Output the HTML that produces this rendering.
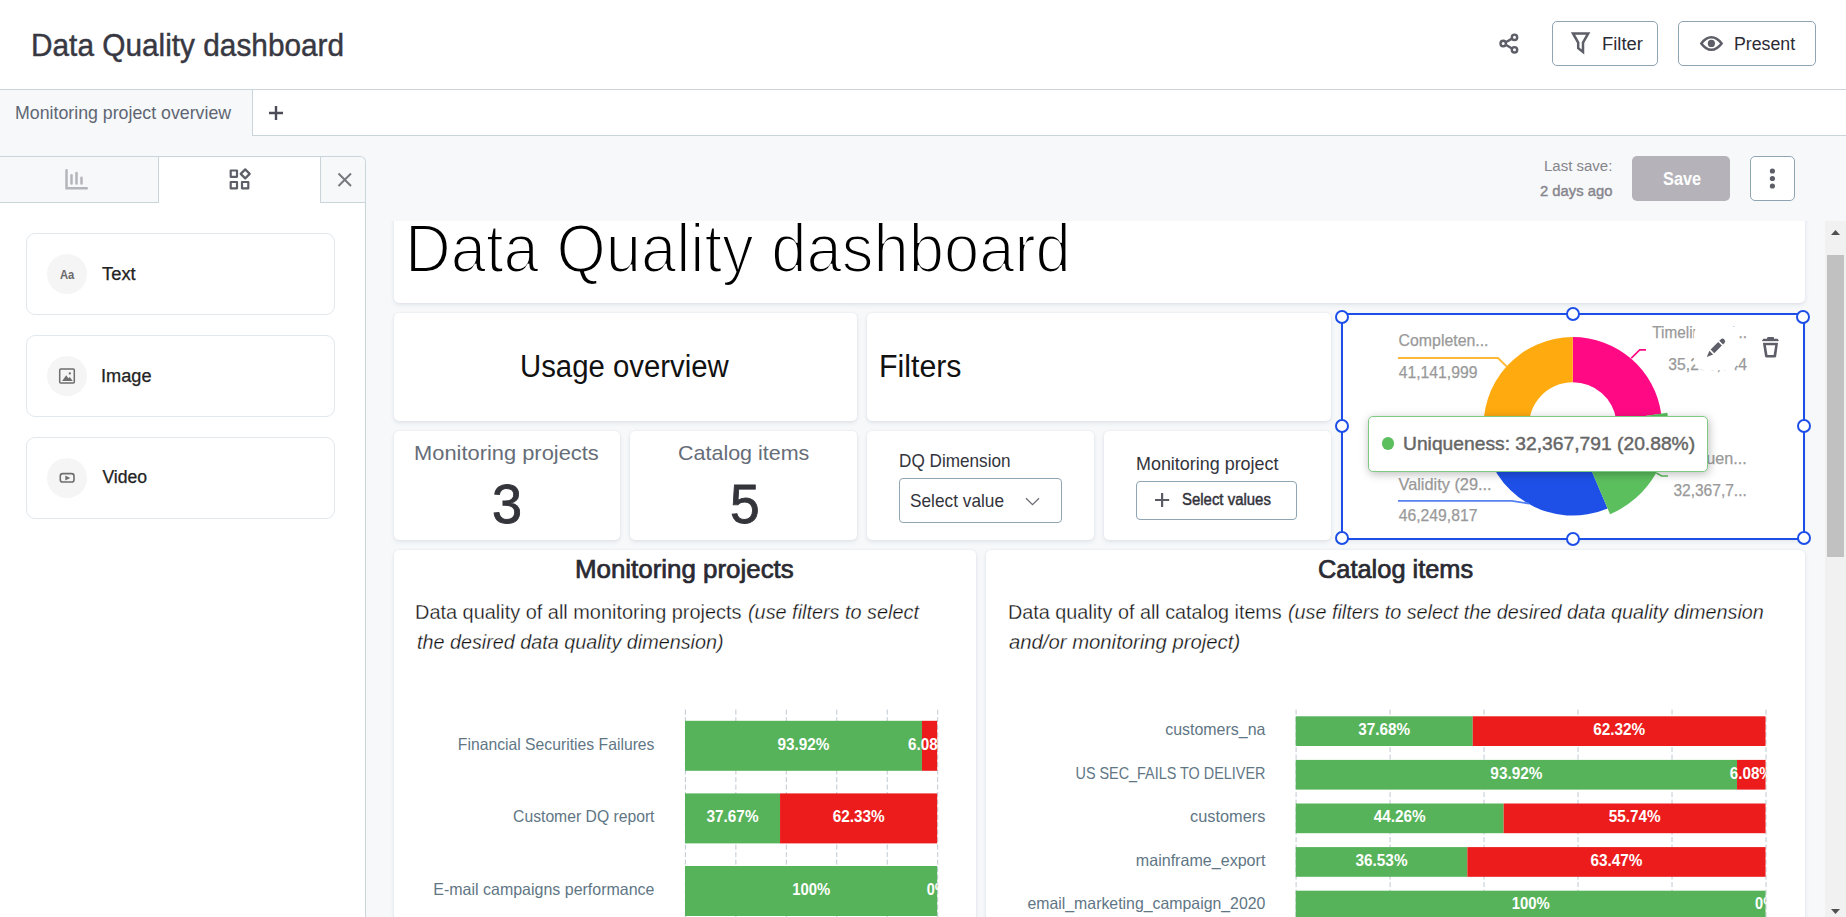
<!DOCTYPE html>
<html lang="en"><head><meta charset="utf-8"><title>Data Quality dashboard</title>
<style>
*{box-sizing:border-box;margin:0;padding:0}
html,body{width:1846px;height:917px;overflow:hidden;background:#f6f8fa;font-family:"Liberation Sans", sans-serif;}
body{position:relative}
div,span,header,nav,aside,main,section,button,h1,h2,h3,p,svg,ul,li,label{position:absolute}
ul{list-style:none}
.w{left:0;top:0;width:0;height:0}
.t{white-space:nowrap;line-height:normal;transform-origin:0 0;display:block}
h1,h2,h3{font-weight:inherit;font-size:inherit}
button{font-family:inherit;background:#fff;border:1px solid #8fa5b3;border-radius:5px;overflow:visible}
.card{background:#fff;border-radius:5px;box-shadow:0 2px 4px rgba(60,75,95,.10),0 0 2px rgba(60,75,95,.09)}
.pcard{background:#fff;border:1px solid #e2e8ec;border-radius:9px}
.circ{background:#f5f5f5;border-radius:50%}
</style></head>
<body>
<header style="left:0.00px;top:0.00px;width:1846.00px;height:90.00px;background:#fff;border-bottom:1px solid #c9d4db"><h1 class="w"><span class="t" style="left:30.88px;top:27.60px;font-size:31px;color:#383842;transform:scaleX(0.9614);-webkit-text-stroke:0.45px #383842;">Data Quality dashboard</span></h1><svg style="left:1496.00px;top:30.00px" width="26" height="28" viewBox="1496 30 26 28" fill="none" stroke="#5d5e67" stroke-width="2.4"><path d="M1506.2 42 L1511.6 38.9 M1506.2 45 L1511.6 48.2"/><circle cx="1514.5" cy="37.3" r="2.7"/><circle cx="1503.2" cy="43.5" r="2.7"/><circle cx="1514.5" cy="49.8" r="2.7"/></svg><button style="left:1552.00px;top:21.00px;width:106.00px;height:45.00px;"><svg style="left:15.00px;top:7.00px" width="26" height="28" viewBox="1568 29 26 28" fill="none" stroke="#5d5e67" stroke-width="2.5" stroke-linejoin="miter"><path d="M1573 33.4 H1588.2 L1583 42.6 V52 L1578.2 48.2 V42.6 Z"/></svg><span class="t" style="left:48.69px;top:11.80px;font-size:18px;color:#2b2b36;transform:scaleX(1.0229);">Filter</span></button><button style="left:1678.00px;top:21.00px;width:138.00px;height:45.00px;"><svg style="left:19.00px;top:11.00px" width="28" height="22" viewBox="1698 33 28 22" fill="none" stroke="#5d5e67" stroke-width="2.5"><path d="M1701.3 43.4 C1704.5 39 1707.8 37.2 1711.4 37.2 C1715 37.2 1718.3 39 1721.6 43.4 C1718.3 47.8 1715 49.7 1711.4 49.7 C1707.8 49.7 1704.5 47.8 1701.3 43.4 Z"/><circle cx="1711.4" cy="43.4" r="3.6" fill="#5d5e67" stroke="none"/></svg><span class="t" style="left:54.94px;top:11.70px;font-size:18px;color:#2b2b36;transform:scaleX(0.9861);">Present</span></button></header>
<nav style="left:0.00px;top:90.00px;width:1846.00px;height:46.00px;"><div style="left:0.00px;top:0.00px;width:252.00px;height:45.00px;"><span class="t" style="left:15.34px;top:11.90px;font-size:18.5px;color:#5f6672;transform:scaleX(0.9597);">Monitoring project overview</span></div><div style="left:252.00px;top:0.00px;width:1594.00px;height:46.00px;background:#fff;border-left:1px solid #c9d4db;border-bottom:1px solid #c9d4db"><svg style="left:15.00px;top:15.00px" width="16" height="16" viewBox="268 105 16 16" stroke="#4b4c57" stroke-width="2.4" fill="none"><path d="M276 106 V120 M269 113 H283"/></svg></div></nav>
<aside style="left:0.00px;top:156.00px;width:366.00px;height:770.00px;background:#fff;border-top:1px solid #c9d4db;border-right:1px solid #c9d4db;border-top-right-radius:6px"><div style="left:0.00px;top:0.00px;width:159.00px;height:46.00px;background:#f6f8fa;border-right:1px solid #c9d4db;border-bottom:1px solid #c9d4db"><svg style="left:62.00px;top:9.00px" width="30" height="27" viewBox="62 166 30 27" fill="none" stroke="#b5b4ba" stroke-width="2.5" stroke-linecap="round"><path d="M66.5 170.3 V188.3 H86.8" stroke-linejoin="miter"/><path d="M71.5 175.3 V183.4 M76.5 173.1 V183.4 M81.5 177.8 V183.4"/></svg></div><div style="left:159.00px;top:0.00px;width:161.00px;height:46.00px;"><svg style="left:67.00px;top:8.00px" width="28" height="28" viewBox="226 165 28 28" fill="none" stroke="#5d5e67" stroke-width="2.2" stroke-linejoin="round"><rect x="230.7" y="170.5" width="6.3" height="6.3"/><rect x="230.7" y="182" width="6.3" height="6.3"/><rect x="242" y="182" width="6.3" height="6.3"/><path d="M245.2 169.4 L249.7 173.9 L245.2 178.4 L240.7 173.9 Z"/></svg></div><div style="left:320.00px;top:0.00px;width:45.00px;height:46.00px;background:#f6f8fa;border-left:1px solid #c9d4db;border-bottom:1px solid #c9d4db;border-top-right-radius:5px"><svg style="left:14.00px;top:13.00px" width="20" height="20" viewBox="335 170 20 20" fill="none" stroke="#77777e" stroke-width="2"><path d="M338.5 173.5 L351 186 M351 173.5 L338.5 186"/></svg></div><div class="pcard" style="left:26.00px;top:76.00px;width:309.00px;height:82.00px;"><div class="circ" style="left:20.00px;top:20.00px;width:40.00px;height:40.00px;"></div><span class="t" style="left:32.62px;top:33.50px;font-size:12.5px;color:#6a6a6a;font-weight:700;transform:scaleX(0.8951);">Aa</span><span class="t" style="left:75.01px;top:29.70px;font-size:17.6px;color:#222;transform:scaleX(1.0439);-webkit-text-stroke:0.25px #222;">Text</span></div><div class="pcard" style="left:26.00px;top:178.00px;width:309.00px;height:82.00px;"><div class="circ" style="left:20.00px;top:20.00px;width:40.00px;height:40.00px;"></div><svg style="left:30px;top:30px" width="20" height="20" viewBox="0 0 20 20" fill="none" stroke="#6e6e6e" stroke-width="1.5"><rect x="2.7" y="3" width="14.6" height="14.1" rx="1"/><path d="M5.1 15 L9.2 9.3 L11.3 12.2 L12.8 11 L15.7 15 Z" fill="#6e6e6e" stroke="none"/><circle cx="12.8" cy="7.4" r="1.15" fill="#6e6e6e" stroke="none"/></svg><span class="t" style="left:74.05px;top:29.60px;font-size:17.6px;color:#222;transform:scaleX(1.0333);-webkit-text-stroke:0.25px #222;">Image</span></div><div class="pcard" style="left:26.00px;top:280.00px;width:309.00px;height:82.00px;"><div class="circ" style="left:20.00px;top:20.00px;width:40.00px;height:40.00px;"></div><svg style="left:30px;top:30px" width="20" height="20" viewBox="0 0 20 20" fill="none" stroke="#6e6e6e" stroke-width="1.6"><rect x="3.3" y="5.6" width="13.7" height="8.4" rx="2.3"/><path d="M8.3 7.5 L13.2 10 L8.3 12.4 Z" fill="#6e6e6e" stroke="none"/></svg><span class="t" style="left:75.45px;top:29.30px;font-size:17.6px;color:#222;-webkit-text-stroke:0.25px #222;">Video</span></div></aside>
<div style="left:1530.00px;top:150.00px;width:280.00px;height:60.00px;"><span class="t" style="left:14.47px;top:6.90px;font-size:15.5px;color:#86848c;transform:scaleX(0.9666);">Last save:</span><span class="t" style="left:9.56px;top:31.60px;font-size:15.5px;color:#86848c;transform:scaleX(0.9541);-webkit-text-stroke:0.4px #86848c;">2 days ago</span><button style="left:102.00px;top:6.00px;width:98.00px;height:45.00px;background:#b5b3b9;border:none;border-radius:5px"><span class="t" style="left:30.53px;top:12.70px;font-size:17.6px;color:#fff;font-weight:700;transform:scaleX(0.9278);">Save</span></button><button style="left:220.00px;top:6.00px;width:45.00px;height:45.00px;"><svg style="left:15.00px;top:8.00px" width="12" height="28" viewBox="1766 165 12 28" fill="#5d5e67"><circle cx="1772.4" cy="171" r="2.6"/><circle cx="1772.4" cy="178.5" r="2.6"/><circle cx="1772.4" cy="186" r="2.6"/></svg></button></div>
<main style="left:366px;top:221px;width:1459px;height:696px;overflow:hidden"><section class="card" style="left:28.00px;top:-71.00px;width:1411.00px;height:152.70px;"><h2 class="w"><span class="t" style="left:10.80px;top:58.10px;font-size:69.25px;color:#000;transform:scaleX(0.9151);-webkit-text-stroke:2.2px #fff;">Data Quality dashboard</span></h2></section><section class="card" style="left:28.00px;top:92.00px;width:463.00px;height:108.00px;"><h2 class="w"><span class="t" style="left:125.84px;top:35.80px;font-size:31px;color:#111;transform:scaleX(0.9467);">Usage overview</span></h2></section><section class="card" style="left:501.00px;top:92.00px;width:464.00px;height:108.00px;"><h2 class="w"><span class="t" style="left:12.11px;top:35.70px;font-size:31px;color:#111;transform:scaleX(0.9774);">Filters</span></h2></section><section class="card" style="left:28.00px;top:210.00px;width:226.00px;height:109.00px;"><span class="t" style="left:20.11px;top:9.80px;font-size:21px;color:#666d78;transform:scaleX(1.0415);">Monitoring projects</span><span class="t" style="left:97.79px;top:41.20px;font-size:55px;color:#34343b;transform:scaleX(0.9815);-webkit-text-stroke:0.9px #34343b;">3</span></section><section class="card" style="left:264.00px;top:210.00px;width:227.00px;height:109.00px;"><span class="t" style="left:48.01px;top:9.80px;font-size:21px;color:#666d78;transform:scaleX(1.0232);">Catalog items</span><span class="t" style="left:99.71px;top:41.20px;font-size:55px;color:#34343b;transform:scaleX(0.9700);-webkit-text-stroke:0.9px #34343b;">5</span></section><section class="card" style="left:501.00px;top:210.00px;width:227.00px;height:109.00px;"><label class="w"><span class="t" style="left:31.89px;top:18.80px;font-size:19px;color:#33333b;transform:scaleX(0.9027);">DQ Dimension</span></label><button style="left:32.00px;top:47.00px;width:163.00px;height:45.00px;border-radius:4px"><span class="t" style="left:10.12px;top:10.80px;font-size:19px;color:#33333b;transform:scaleX(0.9086);">Select value</span><svg style="left:122.00px;top:15.00px" width="20" height="14" viewBox="1022 494 20 14" fill="none" stroke="#6b6c75" stroke-width="1.3"><path d="M1026 498.2 L1032.5 504.6 L1039 498.2"/></svg></button></section><section class="card" style="left:738.00px;top:210.00px;width:227.00px;height:109.00px;"><label class="w"><span class="t" style="left:31.93px;top:21.60px;font-size:19px;color:#33333b;transform:scaleX(0.9435);">Monitoring project</span></label><button style="left:32.00px;top:50.00px;width:161.00px;height:39.00px;border-radius:4px"><svg style="left:15.00px;top:8.00px" width="20" height="20" viewBox="1152 490 20 20" fill="none" stroke="#5a5b64" stroke-width="2.2"><path d="M1162.1 493 V507 M1155 500 H1169.2"/></svg><span class="t" style="left:45.35px;top:9.00px;font-size:15.8px;color:#33333b;transform:scaleX(0.9457);-webkit-text-stroke:0.45px #33333b;">Select values</span></button></section><section class="card" style="left:28.00px;top:329.00px;width:581.50px;height:410.00px;"><h3 class="w"><span class="t" style="left:181.03px;top:4.90px;font-size:25px;color:#2a2a33;transform:scaleX(1.0357);-webkit-text-stroke:0.7px #2a2a33;">Monitoring projects</span></h3><p class="w"><span class="t" style="left:21.22px;top:50.10px;font-size:20.5px;color:#111;transform:scaleX(0.9712);-webkit-text-stroke:0.3px #fff;">Data quality of all monitoring projects</span><span class="t" style="left:353.52px;top:50.10px;font-size:20.5px;color:#111;font-style:italic;transform:scaleX(0.9680);-webkit-text-stroke:0.3px #fff;">(use filters to select</span><span class="t" style="left:23.15px;top:79.80px;font-size:20.5px;color:#111;font-style:italic;transform:scaleX(0.9639);-webkit-text-stroke:0.3px #fff;">the desired data quality dimension)</span></p><svg style="left:6.00px;top:150.00px;overflow:hidden" width="560" height="217" viewBox="400 700 560 217" font-family='"Liberation Sans", sans-serif'><line x1="685.40" y1="709.6" x2="685.40" y2="930" stroke="#bfc9d3" stroke-width="1" stroke-dasharray="5 2.5"/><line x1="735.86" y1="709.6" x2="735.86" y2="930" stroke="#bfc9d3" stroke-width="1" stroke-dasharray="5 2.5"/><line x1="786.32" y1="709.6" x2="786.32" y2="930" stroke="#bfc9d3" stroke-width="1" stroke-dasharray="5 2.5"/><line x1="836.78" y1="709.6" x2="836.78" y2="930" stroke="#bfc9d3" stroke-width="1" stroke-dasharray="5 2.5"/><line x1="887.24" y1="709.6" x2="887.24" y2="930" stroke="#bfc9d3" stroke-width="1" stroke-dasharray="5 2.5"/><line x1="937.70" y1="709.6" x2="937.70" y2="930" stroke="#bfc9d3" stroke-width="1" stroke-dasharray="5 2.5"/><clipPath id="clipL"><rect x="683" y="709.6" width="254.60" height="300"/></clipPath><text x="654.5" y="749.70" text-anchor="end" textLength="196.7" lengthAdjust="spacingAndGlyphs" font-size="16.5" fill="#5f7685">Financial Securities Failures</text><text x="654.5" y="822.30" text-anchor="end" textLength="141.4" lengthAdjust="spacingAndGlyphs" font-size="16.5" fill="#5f7685">Customer DQ report</text><text x="654.5" y="894.90" text-anchor="end" textLength="221.2" lengthAdjust="spacingAndGlyphs" font-size="16.5" fill="#5f7685">E-mail campaigns performance</text><g clip-path="url(#clipL)"><rect x="685.00" y="720.80" width="236.96" height="50" fill="#56b35a"/><rect x="921.96" y="720.80" width="15.34" height="50" fill="#ec1c1c"/><text x="803.48" y="749.70" text-anchor="middle" textLength="52.0" lengthAdjust="spacingAndGlyphs" font-size="16.5" font-weight="700" fill="#fff">93.92%</text><text x="929.63" y="749.70" text-anchor="middle" textLength="43.3" lengthAdjust="spacingAndGlyphs" font-size="16.5" font-weight="700" fill="#fff">6.08%</text><rect x="685.00" y="793.40" width="95.04" height="50" fill="#56b35a"/><rect x="780.04" y="793.40" width="157.26" height="50" fill="#ec1c1c"/><text x="732.52" y="822.30" text-anchor="middle" textLength="52.0" lengthAdjust="spacingAndGlyphs" font-size="16.5" font-weight="700" fill="#fff">37.67%</text><text x="858.67" y="822.30" text-anchor="middle" textLength="52.0" lengthAdjust="spacingAndGlyphs" font-size="16.5" font-weight="700" fill="#fff">62.33%</text><rect x="685.00" y="866.00" width="252.30" height="50" fill="#56b35a"/><text x="811.15" y="894.90" text-anchor="middle" textLength="38.0" lengthAdjust="spacingAndGlyphs" font-size="16.5" font-weight="700" fill="#fff">100%</text><text x="937.30" y="894.90" text-anchor="middle" textLength="21.0" lengthAdjust="spacingAndGlyphs" font-size="16.5" font-weight="700" fill="#fff">0%</text></g></svg></section><section class="card" style="left:620.00px;top:329.00px;width:819.00px;height:410.00px;"><h3 class="w"><span class="t" style="left:331.76px;top:4.70px;font-size:25px;color:#2a2a33;transform:scaleX(1.0154);-webkit-text-stroke:0.7px #2a2a33;">Catalog items</span></h3><p class="w"><span class="t" style="left:21.93px;top:50.00px;font-size:20.5px;color:#111;transform:scaleX(0.9648);-webkit-text-stroke:0.3px #fff;">Data quality of all catalog items</span><span class="t" style="left:302.22px;top:50.00px;font-size:20.5px;color:#111;font-style:italic;transform:scaleX(0.9644);-webkit-text-stroke:0.3px #fff;">(use filters to select the desired data quality dimension</span><span class="t" style="left:23.09px;top:79.60px;font-size:20.5px;color:#111;font-style:italic;transform:scaleX(0.9896);-webkit-text-stroke:0.3px #fff;">and/or monitoring project)</span></p><svg style="left:14.00px;top:150.00px;overflow:hidden" width="800" height="217" viewBox="1000 700 800 217" font-family='"Liberation Sans", sans-serif'><line x1="1296.10" y1="709.6" x2="1296.10" y2="930" stroke="#bfc9d3" stroke-width="1" stroke-dasharray="5 2.5"/><line x1="1390.08" y1="709.6" x2="1390.08" y2="930" stroke="#bfc9d3" stroke-width="1" stroke-dasharray="5 2.5"/><line x1="1484.06" y1="709.6" x2="1484.06" y2="930" stroke="#bfc9d3" stroke-width="1" stroke-dasharray="5 2.5"/><line x1="1578.04" y1="709.6" x2="1578.04" y2="930" stroke="#bfc9d3" stroke-width="1" stroke-dasharray="5 2.5"/><line x1="1672.02" y1="709.6" x2="1672.02" y2="930" stroke="#bfc9d3" stroke-width="1" stroke-dasharray="5 2.5"/><line x1="1766.00" y1="709.6" x2="1766.00" y2="930" stroke="#bfc9d3" stroke-width="1" stroke-dasharray="5 2.5"/><clipPath id="clipR"><rect x="1293.7" y="709.6" width="472.20" height="300"/></clipPath><text x="1265.4" y="734.90" text-anchor="end" textLength="100.2" lengthAdjust="spacingAndGlyphs" font-size="16.5" fill="#5f7685">customers_na</text><text x="1265.4" y="778.50" text-anchor="end" textLength="189.9" lengthAdjust="spacingAndGlyphs" font-size="16.5" fill="#5f7685">US SEC_FAILS TO DELIVER</text><text x="1265.4" y="822.10" text-anchor="end" textLength="75.3" lengthAdjust="spacingAndGlyphs" font-size="16.5" fill="#5f7685">customers</text><text x="1265.4" y="865.70" text-anchor="end" textLength="129.6" lengthAdjust="spacingAndGlyphs" font-size="16.5" fill="#5f7685">mainframe_export</text><text x="1265.4" y="909.30" text-anchor="end" textLength="238.0" lengthAdjust="spacingAndGlyphs" font-size="16.5" fill="#5f7685">email_marketing_campaign_2020</text><g clip-path="url(#clipR)"><rect x="1295.70" y="716.30" width="177.06" height="29.7" fill="#56b35a"/><rect x="1472.76" y="716.30" width="292.84" height="29.7" fill="#ec1c1c"/><text x="1384.23" y="734.90" text-anchor="middle" textLength="52.0" lengthAdjust="spacingAndGlyphs" font-size="16.5" font-weight="700" fill="#fff">37.68%</text><text x="1619.18" y="734.90" text-anchor="middle" textLength="52.0" lengthAdjust="spacingAndGlyphs" font-size="16.5" font-weight="700" fill="#fff">62.32%</text><rect x="1295.70" y="759.90" width="441.33" height="29.7" fill="#56b35a"/><rect x="1737.03" y="759.90" width="28.57" height="29.7" fill="#ec1c1c"/><text x="1516.37" y="778.50" text-anchor="middle" textLength="52.0" lengthAdjust="spacingAndGlyphs" font-size="16.5" font-weight="700" fill="#fff">93.92%</text><text x="1751.32" y="778.50" text-anchor="middle" textLength="43.3" lengthAdjust="spacingAndGlyphs" font-size="16.5" font-weight="700" fill="#fff">6.08%</text><rect x="1295.70" y="803.50" width="207.98" height="29.7" fill="#56b35a"/><rect x="1503.68" y="803.50" width="261.92" height="29.7" fill="#ec1c1c"/><text x="1399.69" y="822.10" text-anchor="middle" textLength="52.0" lengthAdjust="spacingAndGlyphs" font-size="16.5" font-weight="700" fill="#fff">44.26%</text><text x="1634.64" y="822.10" text-anchor="middle" textLength="52.0" lengthAdjust="spacingAndGlyphs" font-size="16.5" font-weight="700" fill="#fff">55.74%</text><rect x="1295.70" y="847.10" width="171.65" height="29.7" fill="#56b35a"/><rect x="1467.35" y="847.10" width="298.25" height="29.7" fill="#ec1c1c"/><text x="1381.53" y="865.70" text-anchor="middle" textLength="52.0" lengthAdjust="spacingAndGlyphs" font-size="16.5" font-weight="700" fill="#fff">36.53%</text><text x="1616.48" y="865.70" text-anchor="middle" textLength="52.0" lengthAdjust="spacingAndGlyphs" font-size="16.5" font-weight="700" fill="#fff">63.47%</text><rect x="1295.70" y="890.70" width="469.90" height="29.7" fill="#56b35a"/><text x="1530.65" y="909.30" text-anchor="middle" textLength="38.0" lengthAdjust="spacingAndGlyphs" font-size="16.5" font-weight="700" fill="#fff">100%</text><text x="1765.60" y="909.30" text-anchor="middle" textLength="21.0" lengthAdjust="spacingAndGlyphs" font-size="16.5" font-weight="700" fill="#fff">0%</text></g></svg></section><section class="card" style="left:976.00px;top:93.00px;width:462.00px;height:225.00px;border-radius:3px"><svg style="left:0px;top:0px" width="462" height="225" viewBox="1342 314 462 225" font-family='"Liberation Sans", sans-serif'><path d="M1572.80 337.00 A89.30 89.30 0 0 1 1661.20 413.69 L1616.36 420.09 A44.00 44.00 0 0 0 1572.80 382.30 Z" fill="#ff0a84"/><path d="M1607.62 508.53 A89.30 89.30 0 0 1 1483.92 434.93 L1529.01 430.55 A44.00 44.00 0 0 0 1589.96 466.82 Z" fill="#1e50e8"/><path d="M1483.92 434.93 A89.30 89.30 0 0 1 1572.80 337.00 L1572.80 382.30 A44.00 44.00 0 0 0 1529.01 430.55 Z" fill="#ffab0f"/><path d="M1667.39 412.81 A95.55 95.55 0 0 1 1610.06 514.29 L1591.16 469.65 A47.08 47.08 0 0 0 1619.41 419.65 Z" fill="#5cbf5e"/><path d="M1398 358 H1498 L1507.1 366.9" fill="none" stroke="#ffb836" stroke-width="1.9"/><path d="M1631.3 358.1 L1639.7 349.9 H1646" fill="none" stroke="#ff0a84" stroke-width="1.6"/><path d="M1398 500.9 H1511.7 L1529 503.6" fill="none" stroke="#5580f0" stroke-width="1.9"/><path d="M1656.4 473 L1661.6 476 H1668" fill="none" stroke="#5cbf5e" stroke-width="1.6"/><text x="1398.6" y="345.9" textLength="89.9" lengthAdjust="spacingAndGlyphs" font-size="16.5" fill="#999" stroke="#999" stroke-width="0.25">Completen...</text><text x="1398.7" y="377.9" textLength="78.7" lengthAdjust="spacingAndGlyphs" font-size="16.5" fill="#999" stroke="#999" stroke-width="0.25">41,141,999</text><text x="1398.5" y="489.6" textLength="93.1" lengthAdjust="spacingAndGlyphs" font-size="16.5" fill="#999" stroke="#999" stroke-width="0.25">Validity (29...</text><text x="1398.7" y="520.9" textLength="78.7" lengthAdjust="spacingAndGlyphs" font-size="16.5" fill="#999" stroke="#999" stroke-width="0.25">46,249,817</text><text x="1747.0" y="337.7" text-anchor="end" textLength="94.7" lengthAdjust="spacingAndGlyphs" font-size="16.5" fill="#999" stroke="#999" stroke-width="0.25">Timeliness (...</text><text x="1747.0" y="369.8" text-anchor="end" textLength="78.7" lengthAdjust="spacingAndGlyphs" font-size="16.5" fill="#999" stroke="#999" stroke-width="0.25">35,258,544</text><text x="1746.8" y="463.7" text-anchor="end" textLength="74.0" lengthAdjust="spacingAndGlyphs" font-size="16.5" fill="#999" stroke="#999" stroke-width="0.25">Uniquen...</text><text x="1746.8" y="496.0" text-anchor="end" textLength="73.4" lengthAdjust="spacingAndGlyphs" font-size="16.5" fill="#999" stroke="#999" stroke-width="0.25">32,367,7...</text></svg><button style="left:351.50px;top:11.00px;width:44.50px;height:45.30px;background:#fff;border:none;border-radius:9px"><svg style="left:6.50px;top:7.00px" width="32" height="32" viewBox="1700 332 32 32" fill="#5d5e67"><g transform="translate(1706.8 357) rotate(45)"><path d="M0 0 L-2.6 -6.3 H2.6 Z"/><rect x="-2.6" y="-18.7" width="5.2" height="10.7"/><path d="M-2.6 -20.3 H2.6 V-22.2 A2.6 2.6 0 0 0 -2.6 -22.2 Z"/></g></svg></button><button style="left:412.00px;top:11.00px;width:33.00px;height:45.00px;background:none;border:none"><svg style="left:4.00px;top:9.00px" width="26" height="28" viewBox="1758 334 26 28" fill="#5d5e67"><path d="M1767.6 337.1 H1773.6 L1774.2 338.8 H1777.6 L1779 341.1 H1761.9 L1763.3 338.8 H1766.9 Z"/><path fill-rule="evenodd" d="M1762.9 343 H1778 L1776.2 356.2 Q1776 357.6 1774.6 357.6 H1766.6 Q1765.2 357.6 1765 356.2 Z M1765.9 345.2 L1767.5 354.9 H1773.6 L1775.2 345.2 Z"/><rect x="1762.6" y="341.3" width="15.7" height="1.5" fill="#dcdcde"/></svg></button><div style="left:26.00px;top:102.00px;width:339.50px;height:55.50px;background:#fff;border:1.3px solid #7fc982;border-radius:5px;box-shadow:1px 2px 10px rgba(0,0,0,.27)"><div style="left:12.50px;top:20.30px;width:12.40px;height:12.40px;background:#5cbf5e;border-radius:50%"></div><span class="t" style="left:33.54px;top:15.90px;font-size:19px;color:#666;transform:scaleX(1.0130);-webkit-text-stroke:0.45px #666;">Uniqueness: 32,367,791 (20.88%)</span></div><div style="left:-1.00px;top:-1.00px;width:464.00px;height:226.60px;border:2px solid #1d4ee8"></div><div style="left:-6.80px;top:-4.50px;width:14.00px;height:14.00px;background:#fff;border:2px solid #1d4ee8;border-radius:50%"></div><div style="left:223.70px;top:-6.90px;width:14.00px;height:14.00px;background:#fff;border:2px solid #1d4ee8;border-radius:50%"></div><div style="left:454.40px;top:-4.50px;width:14.00px;height:14.00px;background:#fff;border:2px solid #1d4ee8;border-radius:50%"></div><div style="left:-6.80px;top:105.00px;width:14.00px;height:14.00px;background:#fff;border:2px solid #1d4ee8;border-radius:50%"></div><div style="left:454.70px;top:105.00px;width:14.00px;height:14.00px;background:#fff;border:2px solid #1d4ee8;border-radius:50%"></div><div style="left:-6.80px;top:216.60px;width:14.00px;height:14.00px;background:#fff;border:2px solid #1d4ee8;border-radius:50%"></div><div style="left:223.70px;top:218.00px;width:14.00px;height:14.00px;background:#fff;border:2px solid #1d4ee8;border-radius:50%"></div><div style="left:454.90px;top:216.60px;width:14.00px;height:14.00px;background:#fff;border:2px solid #1d4ee8;border-radius:50%"></div></section></main>
<div style="left:1825.00px;top:221.00px;width:21.00px;height:696.00px;background:#f1f1f1"><div style="left:2.00px;top:34.00px;width:17.00px;height:301.70px;background:#c1c1c1"></div><svg style="left:0.00px;top:0.00px" width="21" height="21" viewBox="1825 221 21 21" ><path d="M1831 235 L1835.5 230 L1840 235 Z" fill="#505050"/></svg><svg style="left:0.00px;top:675.00px" width="21" height="21" viewBox="1825 896 21 21" ><path d="M1831 909 L1835.5 914 L1840 909 Z" fill="#505050"/></svg></div>
</body></html>
